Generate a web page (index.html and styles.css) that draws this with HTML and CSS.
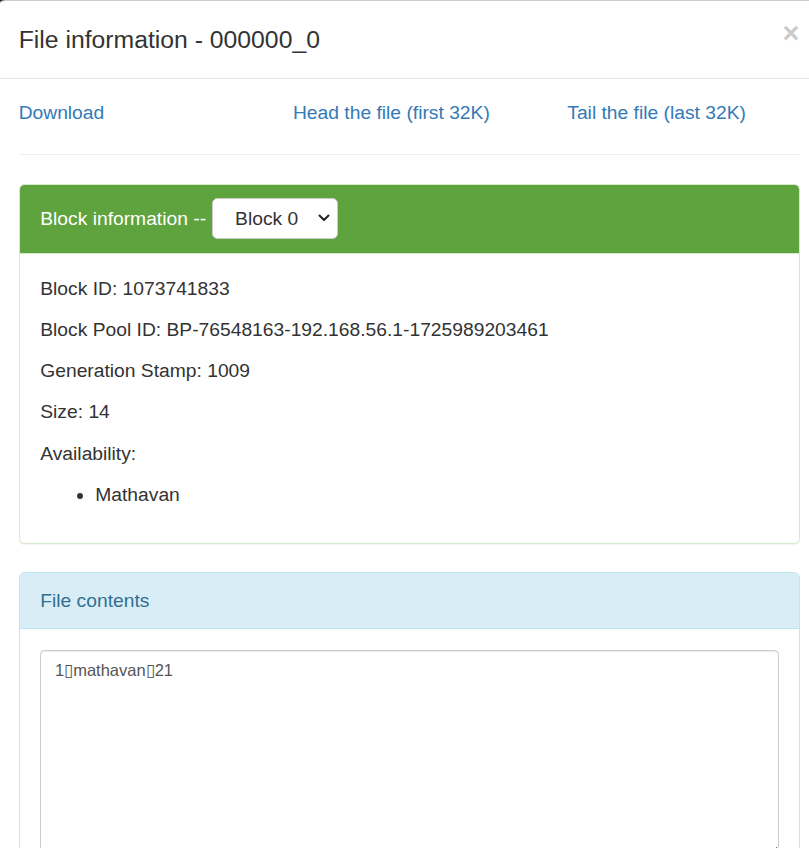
FILE: index.html
```html
<!DOCTYPE html>
<html lang="en">
<head>
<meta charset="utf-8">
<title>File information - 000000_0</title>
<link rel="stylesheet" href="styles.css">
</head>
<body>
<div class="modal-dialog">
  <div class="modal-content">
    <div class="modal-header">
      <h4 class="modal-title">File information - 000000_0</h4>
      <button type="button" class="close" aria-label="Close">&times;</button>
    </div>
    <div class="modal-body">
      <div class="link-row">
        <a class="link" href="#">Download</a>
        <a class="link" href="#">Head the file (first 32K)</a>
        <a class="link" href="#">Tail the file (last 32K)</a>
      </div>
      <hr class="divider">
      <div class="panel panel-success">
        <div class="panel-heading panel-heading-flex">
          <span>Block information --</span>
          <span class="select-wrap">
            <select class="block-select">
              <option>Block 0</option>
            </select>
            <svg class="select-arrow" width="12" height="8" viewBox="0 0 12 8"><path d="M1.5 1.5 L6 6 L10.5 1.5" fill="none" stroke="#222" stroke-width="2" stroke-linecap="round" stroke-linejoin="round"/></svg>
          </span>
        </div>
        <div class="panel-body">
          <p class="info">Block ID: 1073741833</p>
          <p class="info">Block Pool ID: BP-76548163-192.168.56.1-1725989203461</p>
          <p class="info">Generation Stamp: 1009</p>
          <p class="info">Size: 14</p>
          <p class="info">Availability:</p>
          <ul class="hosts">
            <li>Mathavan</li>
          </ul>
        </div>
      </div>
      <div class="panel panel-info">
        <div class="panel-heading">File contents</div>
        <div class="panel-body">
          <textarea class="form-control">1▯mathavan▯21</textarea>
        </div>
      </div>
    </div>
  </div>
</div>
</body>
</html>
```

FILE: styles.css
```css
html, body {
  margin: 0;
  padding: 0;
  overflow: hidden;
  height: 100%;
}
body {
  background: #22391a;
  font-family: "Liberation Sans", Arial, Helvetica, sans-serif;
  font-size: 19.25px;
  line-height: 27.5px;
  color: #333;
}
.modal-dialog {
  width: 825px;
  margin-left: -3px;
}
.modal-content {
  background: #fff;
  border: 1px solid rgba(0, 0, 0, 0.2);
  border-radius: 8.25px;
  min-height: 900px;
  box-sizing: border-box;
}
.modal-header {
  display: flex;
  justify-content: space-between;
  align-items: flex-start;
  padding: 20.625px;
  border-bottom: 1px solid #e5e5e5;
}
.modal-title {
  margin: 0;
  font-size: 24.75px;
  line-height: 35.36px;
  font-weight: 400;
  color: #333;
}
.close {
  margin-top: -2.75px;
  margin-right: 1px;
  padding: 0;
  border: 0;
  background: transparent;
  font-family: "Liberation Sans", Arial, sans-serif;
  font-size: 28.875px;
  font-weight: 700;
  line-height: 1;
  color: #000;
  opacity: 0.2;
}
.modal-body {
  padding: 20.625px;
}
.link-row {
  display: grid;
  grid-template-columns: repeat(3, 1fr);
  margin: 0 -20.625px;
}
.link {
  padding: 0 20.625px;
  color: #337ab7;
  text-decoration: none;
}
.divider {
  margin: 27.5px 0 28.5px;
  border: 0;
  border-top: 1px solid #eee;
  height: 0;
}
.panel {
  margin-bottom: 28px;
  background: #fff;
  border: 1px solid transparent;
  border-radius: 5.5px;
  box-shadow: 0 1px 1px rgba(0, 0, 0, 0.05);
}
.panel-heading {
  padding: 13.75px 20.625px;
  border-bottom: 1px solid transparent;
  border-top-left-radius: 4.5px;
  border-top-right-radius: 4.5px;
}
.panel-heading-flex {
  display: flex;
  align-items: center;
  gap: 6px;
}
.panel-body {
  padding: 21px 20.625px;
}
.panel-success {
  border-color: #d6e9c6;
}
.panel-success > .panel-heading {
  color: #fff;
  background: #5fa33e;
  border-color: #d6e9c6;
}
.panel-info {
  border-color: #bce8f1;
}
.panel-info > .panel-heading {
  color: #31708f;
  background: #d9edf7;
  border-color: #bce8f1;
}
.select-wrap {
  position: relative;
  display: inline-flex;
}
.block-select {
  appearance: none;
  -webkit-appearance: none;
  width: 126px;
  height: 40.5px;
  padding: 0 30px 0 22px;
  font-family: "Liberation Sans", Arial, sans-serif;
  font-size: 19.25px;
  color: #333;
  background: #fff;
  border: 1px solid #ccc;
  border-radius: 5.5px;
}
.select-arrow {
  position: absolute;
  right: 8px;
  top: 16px;
  pointer-events: none;
}
.info {
  margin: 0 0 13.75px;
}
.hosts {
  margin: 0 0 13.75px;
  padding-left: 55px;
}
.form-control {
  display: block;
  width: 100%;
  box-sizing: border-box;
  height: 206.25px;
  padding: 6.875px 13.75px;
  font-family: "Liberation Sans", Arial, sans-serif;
  font-size: 16.5px;
  line-height: 1.5;
  color: #555;
  background: #fff;
  border: 1px solid #ccc;
  border-radius: 4.125px;
  box-shadow: inset 0 1px 1px rgba(0, 0, 0, 0.075);
  margin: 0;
}
```
